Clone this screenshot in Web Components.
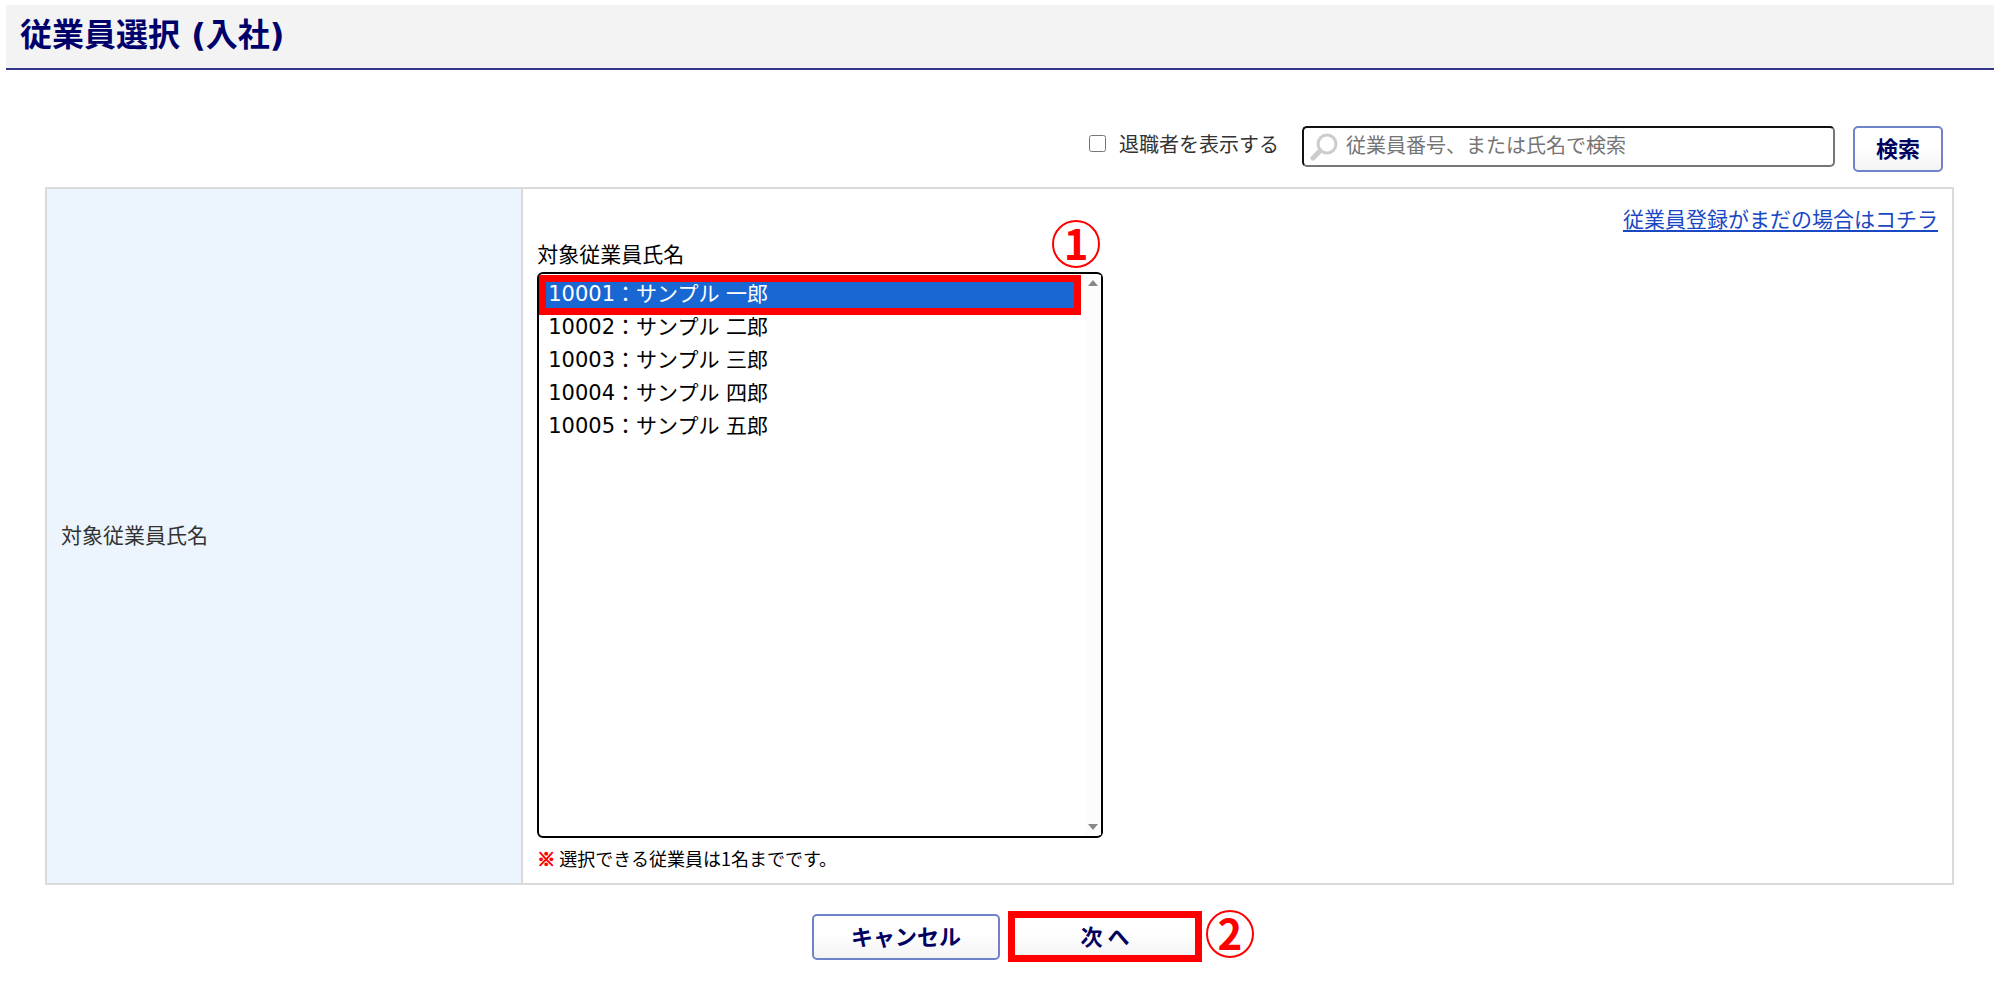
<!DOCTYPE html>
<html lang="ja">
<head>
<meta charset="utf-8">
<title>従業員選択 (入社)</title>
<style>
  body {
    margin: 0;
    background: #fff;
    color: #000;
    font-family: "DejaVu Sans", "Noto Sans CJK JP", sans-serif;
    font-size: 21px;
    line-height: 32px;
  }
</style>
</head>
<body>
<emp-page>
  <emp-title slot="title">従業員選択 (入社)</emp-title>
  <emp-search slot="search"></emp-search>
  <emp-field label="対象従業員氏名">
    <emp-picker></emp-picker>
  </emp-field>
  <emp-actions slot="actions"></emp-actions>
</emp-page>

<script>
// attach an open shadow root and fill it
const define = (name, html, setup) => {
  const template = document.createElement('template');
  template.innerHTML = html;
  customElements.define(name, class extends HTMLElement {
    constructor() {
      super();
      this._shadowRoot = this.attachShadow({ mode: 'open' });
      this._shadowRoot.appendChild(template.content.cloneNode(true));
    }

    connectedCallback() {
      if (setup) setup(this, this._shadowRoot);
    }
  });
};

// numbered red marker
define('emp-marker', `
  <style>
    :host {
      display: flex;
      align-items: center;
      justify-content: center;
      box-sizing: border-box;
      width: 48px;
      height: 48px;
      padding-bottom: 4px;
      border: 2px solid #f00;
      border-radius: 50%;
      color: #f00;
      font: bold 42px/40px "Noto Sans CJK JP", sans-serif;
    }
  </style>
  <slot></slot>
`);

// white button with a blue outline
define('emp-button', `
  <style>
    :host { display: block; }
    button {
      display: block;
      box-sizing: border-box;
      width: 100%;
      height: 46px;
      padding: 0 0 4px;
      border: 2px solid #6f83cb;
      border-radius: 5px;
      background: linear-gradient(#fff 40%, #f4f4f4);
      color: #00005f;
      font: bold 22px/32px "Noto Sans CJK JP", sans-serif;
    }
  </style>
  <button type="button"><slot></slot></button>
`);

define('emp-title', `
  <style>
    :host {
      display: block;
      margin: 5px 1px 0 6px;
      border-bottom: 2px solid #35358a;
      background: #f3f3f3;
    }
    h1 {
      margin: 0;
      padding: 0 14px 3px;
      color: #00006a;
      font: bold 32px/60px "DejaVu Sans", "Noto Sans CJK JP", sans-serif;
    }
  </style>
  <h1><slot></slot></h1>
`);

define('emp-search', `
  <style>
    :host {
      display: flex;
      justify-content: flex-end;
      align-items: flex-start;
      padding-right: 11px;
      font-size: 20px;
    }
    .retired {
      display: flex;
      align-items: center;
      gap: 13px;
      margin-right: 23px;
      height: 38px;
      color: #333;
    }
    input[type="checkbox"] {
      width: 17px;
      height: 17px;
      margin: 0 0 4px;
    }
    .box {
      display: flex;
      align-items: center;
      box-sizing: border-box;
      width: 533px;
      height: 41px;
      margin-right: 18px;
      padding: 0 6px;
      border: 2px solid #767676;
      border-top-color: #111;
      border-left-color: #111;
      border-radius: 5px;
    }
    svg { flex: none; }
    input[type="search"] {
      flex: 1;
      min-width: 0;
      height: 32px;
      margin: 0 0 4px 8px;
      padding: 0;
      border: 0;
      outline: 0;
      background: none;
      font: 20px/32px "Noto Sans CJK JP", sans-serif;
    }
    input::placeholder { color: #757575; }
    emp-button { width: 90px; }
  </style>
  <label class="retired"><input type="checkbox">退職者を表示する</label>
  <div class="box">
    <svg width="28" height="28" viewBox="0 0 28 28" fill="none" stroke="#ccc">
      <circle cx="17" cy="11" r="9" stroke-width="3"/>
      <path d="M10 18L3 25" stroke-width="5" stroke-linecap="round"/>
    </svg>
    <input type="search" placeholder="従業員番号、または氏名で検索" aria-label="従業員を検索">
  </div>
  <emp-button>検索</emp-button>
`);

define('emp-field', `
  <style>
    :host {
      display: grid;
      grid-template-columns: 25% 1fr;
      border: 2px solid #dadada;
    }
    .label {
      display: flex;
      align-items: center;
      padding-left: 14px;
      border-right: 2px solid #dadada;
      background: #ecf5fd;
      color: #333;
    }
  </style>
  <div class="label"></div>
  <slot></slot>
`, (host, root) => {
  root.querySelector('.label').textContent = host.getAttribute('label');
});

define('emp-picker', `
  <style>
    :host {
      display: block;
      padding: 15px 14px 9px;
    }
    .register {
      display: block;
      width: fit-content;
      margin-left: auto;
      color: #1a48c4;
      text-underline-offset: 3px;
    }
    .name {
      display: block;
      margin: 3px 0 1px;
    }
    .list {
      position: relative;
      width: 566px;
    }
    select {
      display: block;
      box-sizing: border-box;
      width: 100%;
      height: 566px;
      padding: 3px 24px 0 0;
      border: 2px solid #000;
      border-radius: 6px;
      outline: 0;
      background: #fff;
      color: #000;
      font: inherit;
      overflow: hidden;
    }
    option {
      min-height: 33px;
      padding: 0 9px;
      line-height: 33px;
    }
    option:checked {
      background: linear-gradient(#1967d2, #1967d2);
      color: #fff;
      -webkit-text-fill-color: #fff;
    }
    /* scroll track, laid over the right edge of the list */
    .track {
      position: absolute;
      top: 3px;
      right: 2px;
      bottom: 3px;
      display: flex;
      flex-direction: column;
      justify-content: space-between;
      align-items: center;
      box-sizing: border-box;
      width: 16px;
      padding: 5px 0;
      background: #fcfcfc;
      fill: #888;
      pointer-events: none;
    }
    /* frame over the selected row */
    .frame {
      position: absolute;
      top: 3px;
      left: 2px;
      right: 22px;
      box-sizing: border-box;
      height: 40px;
      border: 7px solid #f00;
      pointer-events: none;
    }
    emp-marker {
      position: absolute;
      top: -52px;
      right: 3px;
    }
    p {
      margin: 4px 0 0;
      font: 18px/32px "Noto Sans CJK JP", sans-serif;
    }
    b {
      color: #f00;
      -webkit-text-stroke: 1px #f00;
    }
  </style>
  <a class="register" href="#">従業員登録がまだの場合はコチラ</a>
  <label class="name" for="employee">対象従業員氏名</label>
  <div class="list">
    <select id="employee" size="17">
      <option selected>10001：サンプル 一郎</option>
      <option>10002：サンプル 二郎</option>
      <option>10003：サンプル 三郎</option>
      <option>10004：サンプル 四郎</option>
      <option>10005：サンプル 五郎</option>
    </select>
    <div class="track">
      <svg width="10" height="6" viewBox="0 0 10 6"><path d="M0 6L5 0L10 6z"/></svg>
      <svg width="10" height="6" viewBox="0 0 10 6"><path d="M0 0L5 6L10 0z"/></svg>
    </div>
    <div class="frame"></div>
    <emp-marker>1</emp-marker>
  </div>
  <p><b>※</b> 選択できる従業員は1名までです。</p>
`);

define('emp-actions', `
  <style>
    :host {
      display: flex;
      justify-content: center;
      align-items: center;
      gap: 8px;
      padding-left: 15px;
    }
    .cancel { width: 188px; }
    .next {
      position: relative;
      box-sizing: border-box;
      width: 194px;
      height: 51px;
      border: 7px solid #f00;
    }
    .next button {
      display: block;
      width: 100%;
      height: 100%;
      padding: 0 0 4px;
      border: 0;
      background: linear-gradient(#fff 40%, #f4f4f4);
      color: #00005f;
      font: bold 22px/32px "Noto Sans CJK JP", sans-serif;
    }
    emp-marker {
      position: absolute;
      top: -8px;
      left: 191px;
    }
  </style>
  <emp-button class="cancel">キャンセル</emp-button>
  <div class="next">
    <button type="button">次 へ</button>
    <emp-marker>2</emp-marker>
  </div>
`);

define('emp-page', `
  <style>
    :host {
      display: block;
      overflow: hidden;
    }
    main { padding: 56px 41px 36px 45px; }
    .search { margin-bottom: 15px; }
    .actions { margin-top: 26px; }
  </style>
  <slot name="title"></slot>
  <main>
    <div class="search"><slot name="search"></slot></div>
    <slot></slot>
    <div class="actions"><slot name="actions"></slot></div>
  </main>
`);
</script>
</body>
</html>
